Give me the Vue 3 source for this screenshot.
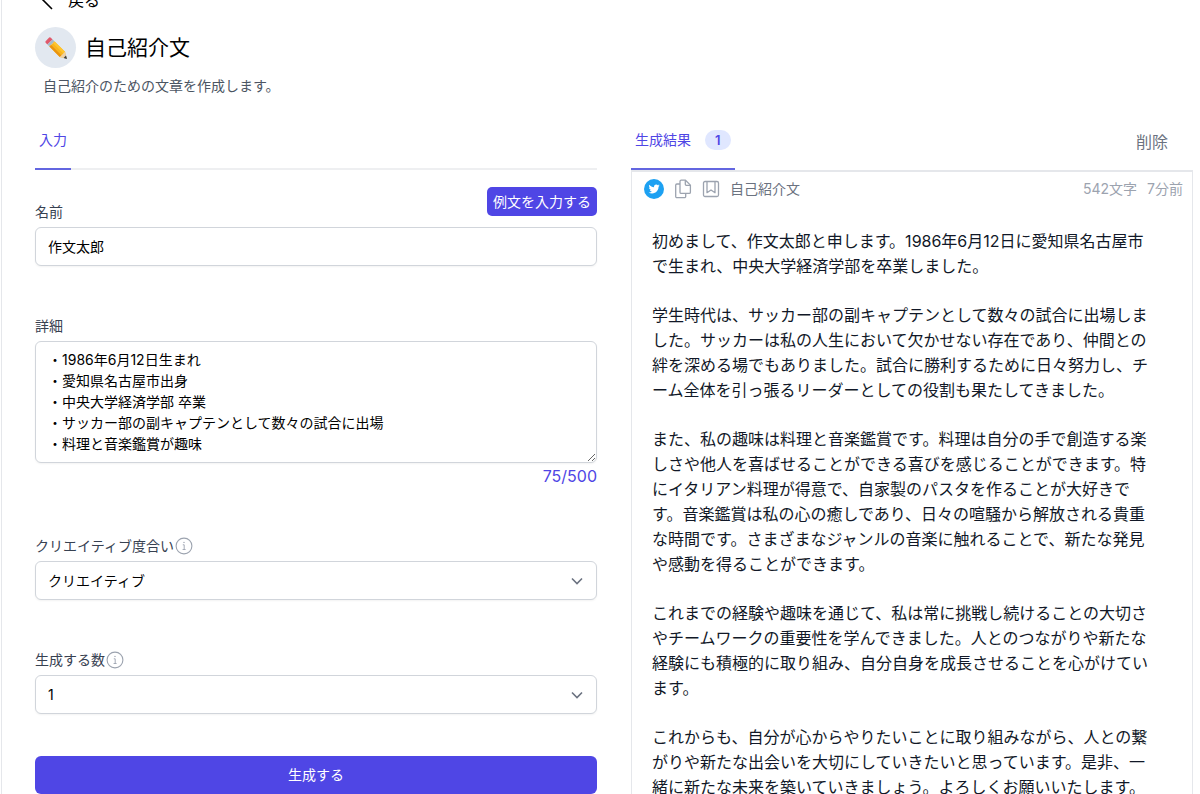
<script setup>
import { ref } from 'vue'

const name = ref('作文太郎')
const detail = ref(`・1986年6月12日生まれ
・愛知県名古屋市出身
・中央大学経済学部 卒業
・サッカー部の副キャプテンとして数々の試合に出場
・料理と音楽鑑賞が趣味`)
const creativity = ref('クリエイティブ')
const count = ref('1')
const usedChars = 75

const paragraphs = [
  `初めまして、作文太郎と申します。1986年6月12日に愛知県名古屋市
で生まれ、中央大学経済学部を卒業しました。`,
  `学生時代は、サッカー部の副キャプテンとして数々の試合に出場しま
した。サッカーは私の人生において欠かせない存在であり、仲間との
絆を深める場でもありました。試合に勝利するために日々努力し、チ
ーム全体を引っ張るリーダーとしての役割も果たしてきました。`,
  `また、私の趣味は料理と音楽鑑賞です。料理は自分の手で創造する楽
しさや他人を喜ばせることができる喜びを感じることができます。特
にイタリアン料理が得意で、自家製のパスタを作ることが大好きで
す。音楽鑑賞は私の心の癒しであり、日々の喧騒から解放される貴重
な時間です。さまざまなジャンルの音楽に触れることで、新たな発見
や感動を得ることができます。`,
  `これまでの経験や趣味を通じて、私は常に挑戦し続けることの大切さ
やチームワークの重要性を学んできました。人とのつながりや新たな
経験にも積極的に取り組み、自分自身を成長させることを心がけてい
ます。`,
  `これからも、自分が心からやりたいことに取り組みながら、人との繋
がりや新たな出会いを大切にしていきたいと思っています。是非、一
緒に新たな未来を築いていきましょう。よろしくお願いいたします。`,
]
</script>

<template>
  <main class="page">
    <header class="head">
      <a class="back" href="#">
        <svg width="12" height="20" viewBox="0 0 12 20" fill="none" stroke="currentColor" stroke-width="1.6"><path d="M11 1 2 10l9 9" /></svg>
        <span>戻る</span>
      </a>
      <div class="title-row">
        <span class="avatar">
          <svg width="24" height="24" viewBox="0 0 24 24">
            <path d="M1.6 5.2 5.2 1.6Q6 1 6.8 1.7L8.6 3.4 3.4 8.6 1.7 6.8Q1 6 1.6 5.2Z" fill="#e0596b" />
            <path d="M3.4 8.6 8.6 3.4 10.6 5.4 5.4 10.6Z" fill="#a9bac6" />
            <path d="M5.4 10.6 10.6 5.4 21 15.8 22.6 22.6 15.8 21Z" fill="#f8b51e" />
            <path d="M5.4 10.6 7.1 8.9 17.6 19.4 15.8 21Z" fill="#e9930f" />
            <path d="M8.9 7.1 10.6 5.4 21 15.8 19.4 17.4Z" fill="#ffc52e" />
            <path d="M15.8 21 17.5 19.2 19.3 17.5 21 15.8 22.8 22.8Z" fill="#ecd0a6" />
            <path d="m19.6 22 2.400-2.400 1 3.400Z" fill="#343b42" />
          </svg>
        </span>
        <h1>自己紹介文</h1>
      </div>
      <p class="desc">自己紹介のための文章を作成します。</p>
    </header>

    <div class="columns">
      <section>
        <nav class="tabs">
          <a class="tab" href="#">入力</a>
        </nav>
        <form class="form" @submit.prevent>
          <div class="field">
            <div class="label-row">
              <label for="name">名前</label>
              <button type="button" class="sample">例文を入力する</button>
            </div>
            <input id="name" v-model="name" class="control" type="text" />
          </div>
          <div class="field">
            <label for="detail">詳細</label>
            <textarea id="detail" v-model="detail" class="control" rows="5"></textarea>
            <p class="counter">{{ usedChars }}/500</p>
          </div>
          <div class="field">
            <label for="creativity">クリエイティブ度合い<svg class="info" width="18" height="18" viewBox="0 0 18 18" fill="none" stroke="currentColor"><circle cx="9" cy="9" r="7.9" stroke-width="1.1" /><path d="M7.8 7.800h1.400v4.600M7.600 12.500h3" stroke-width=".9" /><circle cx="9" cy="5.400" r=".3" /></svg></label>
            <div class="select">
              <select id="creativity" v-model="creativity" class="control"><option>クリエイティブ</option></select>
              <svg class="chevron" width="12" height="12" viewBox="0 0 12 12" fill="none" stroke="currentColor" stroke-width="1.6"><path d="m1 3.500 5 5 5-5" /></svg>
            </div>
          </div>
          <div class="field">
            <label for="count">生成する数<svg class="info" width="18" height="18" viewBox="0 0 18 18" fill="none" stroke="currentColor"><circle cx="9" cy="9" r="7.9" stroke-width="1.1" /><path d="M7.8 7.800h1.400v4.600M7.600 12.500h3" stroke-width=".9" /><circle cx="9" cy="5.400" r=".3" /></svg></label>
            <div class="select">
              <select id="count" v-model="count" class="control"><option>1</option></select>
              <svg class="chevron" width="12" height="12" viewBox="0 0 12 12" fill="none" stroke="currentColor" stroke-width="1.6"><path d="m1 3.500 5 5 5-5" /></svg>
            </div>
          </div>
          <button type="submit" class="submit">生成する</button>
        </form>
      </section>

      <section>
        <nav class="tabs results">
          <a class="tab" href="#">生成結果<span class="badge">1</span></a>
          <button type="button" class="delete">削除</button>
        </nav>
        <article class="card">
          <div class="meta">
            <button type="button" class="icon" aria-label="Twitter">
              <svg width="20" height="20" viewBox="0 0 20 20">
                <circle cx="10" cy="10" r="10" fill="#1da1f2" />
                <path transform="translate(4.6 4.4) scale(.46)" fill="#fff" d="M23.953 4.57a10 10 0 01-2.825.775 4.958 4.958 0 002.163-2.723c-.951.555-2.005.959-3.127 1.184a4.92 4.92 0 00-8.384 4.482C7.69 8.095 4.067 6.13 1.64 3.162a4.822 4.822 0 00-.666 2.475c0 1.71.87 3.213 2.188 4.096a4.904 4.904 0 01-2.228-.616v.06a4.923 4.923 0 003.946 4.827 4.996 4.996 0 01-2.212.085 4.936 4.936 0 004.604 3.417 9.867 9.867 0 01-6.102 2.105c-.39 0-.779-.023-1.17-.067a13.995 13.995 0 007.557 2.209c9.053 0 13.998-7.496 13.998-13.985 0-.21 0-.42-.015-.63A9.935 9.935 0 0024 4.59z" />
              </svg>
            </button>
            <button type="button" class="icon" aria-label="コピー">
              <svg width="18" height="20" viewBox="0 0 18 20" fill="none" stroke="currentColor" stroke-width="1.3" stroke-linejoin="round"><path d="M7.200 1.200h4.300l4.900 4.900v7.100a1.200 1.200 0 0 1-1.200 1.200H7.200A1.200 1.200 0 0 1 6 13.200V2.400a1.200 1.200 0 0 1 1.200-1.200Z" /><path d="M11.300 1.400v3.900a1 1 0 0 0 1 1h3.900M6 5H2.900a1.200 1.200 0 0 0-1.200 1.200v11.300a1.200 1.200 0 0 0 1.200 1.200h7.600a1.200 1.200 0 0 0 1.200-1.200v-3.100" /></svg>
            </button>
            <button type="button" class="icon" aria-label="保存">
              <svg width="18" height="18" viewBox="0 0 18 18" fill="none" stroke="currentColor" stroke-width="1.3" stroke-linejoin="round"><rect x="1.500" y="1.500" width="15" height="15" rx="1.500" /><path d="M5 1.500v11.200l4-2.700 4 2.700V1.500" /></svg>
            </button>
            <span class="kind">自己紹介文</span>
            <span class="chars">542文字</span>
            <span class="time">7分前</span>
          </div>
          <div class="body">
            <p v-for="(text, i) in paragraphs" :key="i">{{ text }}</p>
          </div>
        </article>
      </section>
    </div>
  </main>
</template>

<style>
body {
  margin: 0;
  background: #fff;
}
</style>

<style scoped>
* {
  box-sizing: border-box;
}
.page {
  height: 100vh;
  overflow: hidden;
  margin-left: 1px;
  padding: 0 7px 0 33px;
  border-left: 1px solid #e5e7eb;
  font: 14px/20px Inter, "Noto Sans CJK JP", sans-serif;
  color: #000;
}
h1,
p {
  margin: 0;
  font-weight: 400;
}
a {
  color: inherit;
  text-decoration: none;
}
button {
  border: 0;
  padding: 0;
  background: none;
  font: inherit;
  color: inherit;
  cursor: pointer;
}
.back {
  display: flex;
  align-items: center;
  gap: 15px;
  width: max-content;
  margin-top: -12px;
  padding-left: 6px;
  font-size: 16px;
  line-height: 24px;
}
.title-row {
  display: flex;
  align-items: center;
  gap: 9px;
  margin-top: 15px;
}
.avatar {
  display: grid;
  place-items: center;
  width: 41px;
  height: 41px;
  border-radius: 50%;
  background: #e2e8f0;
}
h1 {
  font-size: 21px;
  line-height: 28px;
}
.desc {
  margin-top: 8px;
  padding-left: 8px;
  color: #4b5563;
}
.columns {
  display: grid;
  grid-template-columns: 1fr 1fr;
  gap: 34px;
  margin-top: 34px;
}
.tabs {
  display: flex;
  justify-content: space-between;
  height: 40px;
  border-bottom: 2px solid #eeeff1;
}
.tab {
  display: flex;
  align-items: flex-start;
  height: 40px;
  padding: 0 4px;
  border-bottom: 2px solid #6366e0;
  color: #4f46e5;
}
.results {
  border-bottom: 0;
}
.badge {
  margin-left: 14px;
  padding: 0 10px;
  border-radius: 10px;
  background: #e0e7ff;
  font-size: 13px;
  font-weight: 600;
}
.delete {
  align-self: flex-start;
  margin-right: 25px;
  font-size: 16px;
  line-height: 24px;
  color: #6b7280;
}
.form {
  display: flex;
  flex-direction: column;
  gap: 50px;
  padding-top: 17px;
}
.field {
  display: flex;
  flex-direction: column;
  gap: 5px;
  color: #374151;
}
.label-row {
  display: flex;
  align-items: flex-end;
  justify-content: space-between;
}
.sample {
  margin-bottom: 6px;
  padding: 4px 6px;
  border-radius: 5px;
  background: #4f46e5;
  line-height: 21px;
  color: #fff;
}
label {
  display: flex;
  align-items: center;
}
.info {
  margin-left: 1px;
  color: #9ca3af;
}
.control {
  display: block;
  width: 100%;
  min-height: 39px;
  margin: 0;
  padding: 7px 12px;
  border: 1px solid #d1d5db;
  border-radius: 6px;
  background: #fff;
  box-shadow: 0 1px 2px rgba(0, 0, 0, 0.05);
  font: inherit;
  line-height: 21px;
  color: #000;
}
textarea.control {
  height: 122px;
  resize: vertical;
}
select.control {
  appearance: none;
}
.select {
  position: relative;
}
.chevron {
  position: absolute;
  top: 14px;
  right: 14px;
  color: #6b7280;
  pointer-events: none;
}
.counter {
  margin-top: -2px;
  font-size: 16px;
  text-align: right;
  color: #4f46e5;
}
.submit {
  height: 38px;
  margin-top: -8px;
  border-radius: 6px;
  background: #4f46e5;
  color: #fff;
}
.card {
  border: 1px solid #e5e7eb;
  border-top-width: 2px;
}
.meta {
  display: flex;
  align-items: center;
  padding: 7px 9px 0 12px;
  gap: 10px;
  color: #6b7280;
}
.icon {
  display: flex;
  color: #9ca3af;
}
.chars {
  margin-left: auto;
  color: #9ca3af;
}
.time {
  color: #9ca3af;
}
.body {
  display: flex;
  flex-direction: column;
  gap: 24px;
  padding: 30px 20px;
  font-size: 16px;
  line-height: 25px;
  color: #111827;
  white-space: pre;
}
</style>
